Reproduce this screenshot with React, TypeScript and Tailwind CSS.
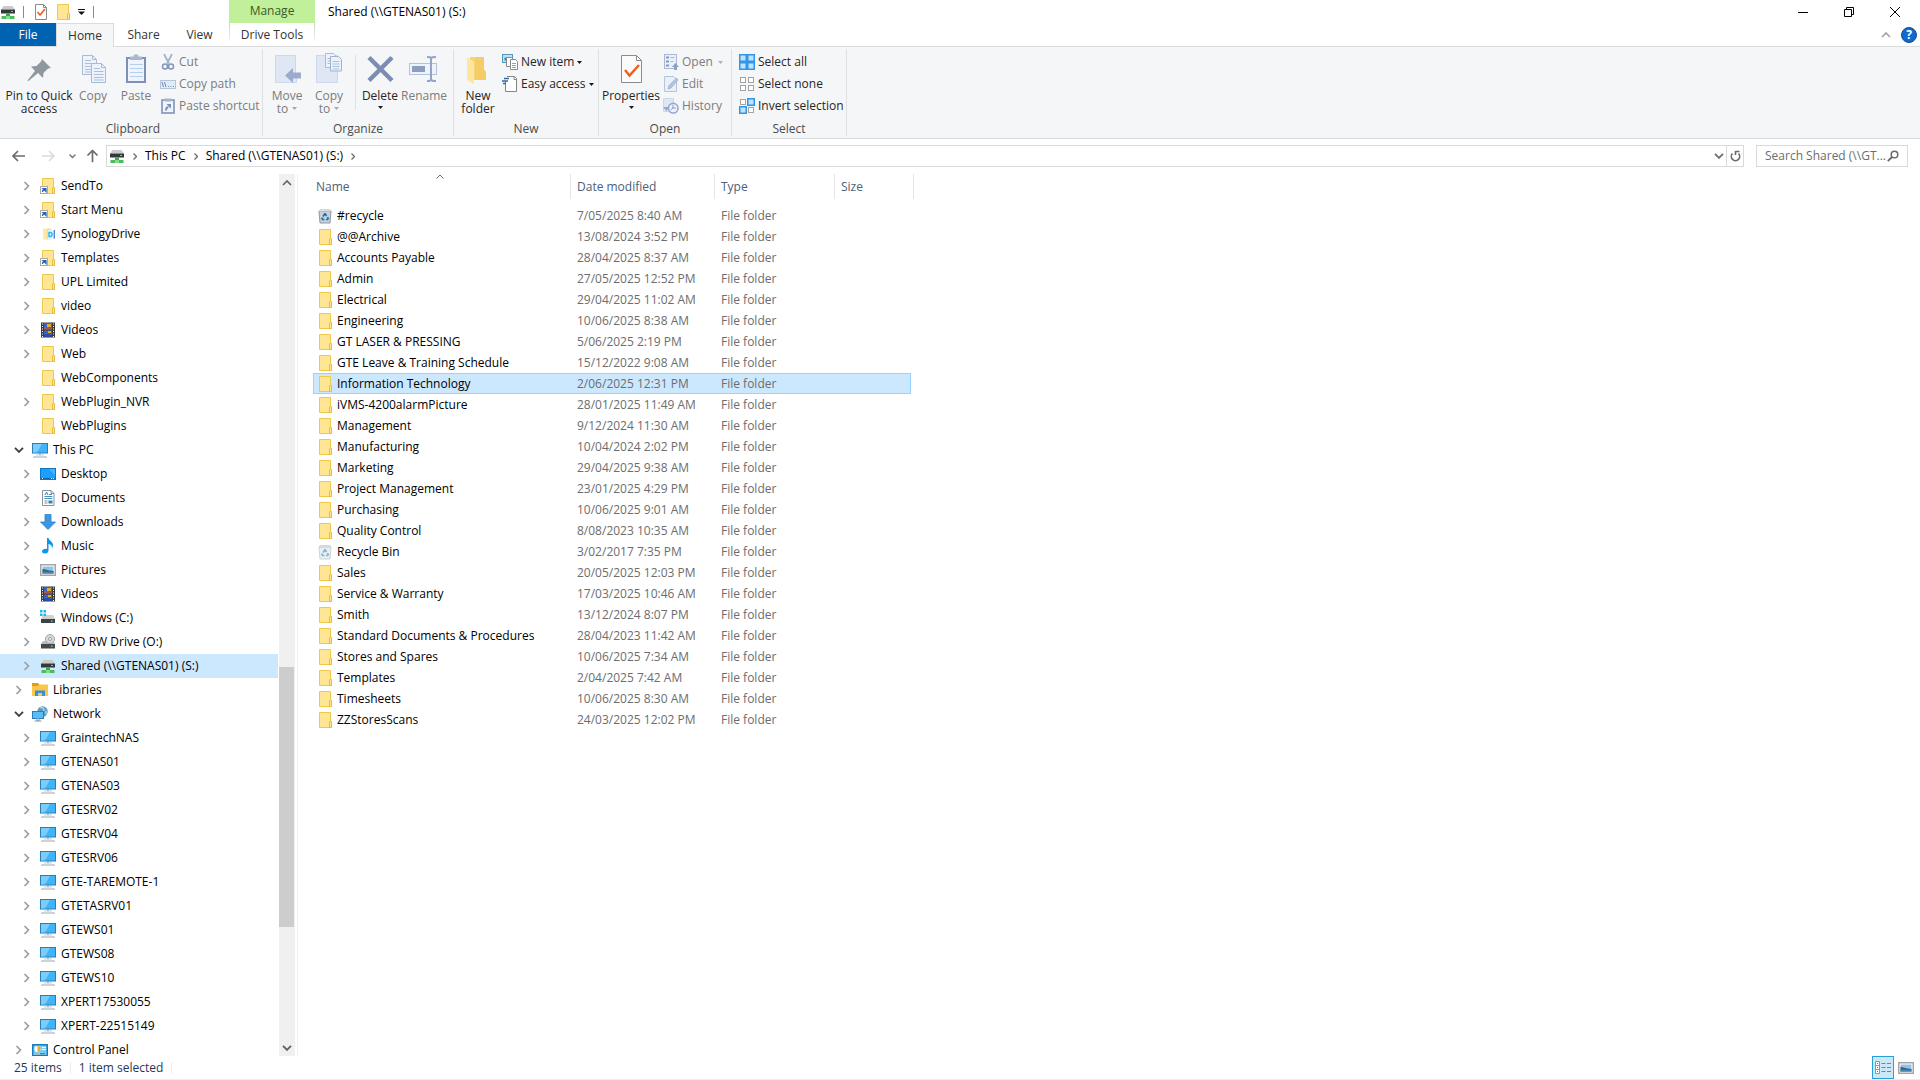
import React from "react";

type IconProps = { className?: string };
const S = ({ s = 16, className = "", children }: { s?: number; className?: string; children: React.ReactNode }) => (
  <svg width={s} height={s} viewBox={`0 0 ${s} ${s}`} className={`shrink-0 ${className}`} fill="none" aria-hidden="true">
    {children}
  </svg>
);

/* ---------- small 16px icons ---------- */
const Folder = () => (
  <S>
    <path d="M2.5.5h11v9h1v6h-12z" fill="#ffe694" stroke="#efc84a" />
    <path d="M12.500 15.500v-5.500l1-1 1 .5v6z" fill="#ffe694" stroke="#e8bd3c" />
  </S>
);
const FolderLink = () => (
  <S>
    <path d="M2.5.5h11v9h1v6h-12z" fill="#ffe694" stroke="#efc84a" />
    <path d="M12.500 15.500v-5.500l1-1 1 .5v6z" fill="#ffe694" stroke="#e8bd3c" />
    <rect x="0.500" y="8.500" width="7" height="7" fill="#fff" stroke="#a9a9a9" />
    <path d="M2.500 14c0-2 .5-2.500 2-2.500M3 10.500h3v3z" stroke="#2a62a8" strokeWidth="1.200" fill="#2a62a8" />
  </S>
);
const Synology = () => (
  <S>
    <path d="M6 2.500h5v11H6z" fill="#fbdc83" />
    <path d="M3 2l3.500 1.500v11L3 13z" fill="#ffe9a8" />
    <rect x="8" y="4" width="7" height="9" fill="#e6f5fc" />
    <path d="M9 6.500h2l1 1v2l-1 1H9z" stroke="#2ab5e8" strokeWidth="1.400" />
    <path d="M14.300 4v8.500" stroke="#4a7fe0" strokeWidth="1.300" />
  </S>
);
const Video = () => (
  <S>
    <rect x="1" y="0.500" width="14" height="15" fill="#3b3b3b" />
    <path d="M2.500 1.500v14M13.500 1.500v14" stroke="#fff" strokeWidth="1" strokeDasharray="1 1.500" />
    <rect x="4" y="1" width="8" height="6.500" fill="#3a63c4" />
    <rect x="4" y="8.500" width="8" height="6.500" fill="#3a63c4" />
    <path d="M7 2h4v3H7z" fill="#d8b12c" />
    <path d="M4 5h4l4 1.500v1H4z" fill="#b7533c" />
    <path d="M8 9h3v2H8z" fill="#d8b12c" />
    <path d="M4 13l3-1 5 1v2H4z" fill="#2b4b9b" />
  </S>
);
const Monitor = () => (
  <S>
    <rect x="0.500" y="1.500" width="15" height="9.500" fill="#40b4fa" stroke="#2b7db3" />
    <path d="M1 2h9l-5 8.500H1z" fill="#7accfb" />
    <path d="M7 11.500h2v1.500H7z" fill="#8ba0b5" />
    <path d="M4 13h8" stroke="#c3ced8" />
    <path d="M1 15h14" stroke="#98a9bc" />
  </S>
);
const Desktop = () => (
  <S>
    <rect x="0.500" y="2.500" width="15" height="11" fill="#1b9efc" stroke="#0a78c4" />
    <path d="M9 3h6v7z" fill="#45b2ff" />
    <path d="M1 12.500h14" stroke="#0868ad" />
    <path d="M2 12.500h1M11 12.500h1M13 12.500h1" stroke="#fff" />
  </S>
);
const Documents = () => (
  <S>
    <path d="M2.500.5h8.500l3 3v12H2.500z" fill="#fff" stroke="#909090" />
    <path d="M11 .5v3h3" stroke="#909090" />
    <path d="M4.500 6.500h8M4.500 8.500h8M9 4.500h3" stroke="#3f8fbf" />
    <path d="M5 5l1.500-3L8 5" stroke="#2f7fb4" />
    <path d="M4.500 11h3M4.500 13h3" stroke="#8a8a8a" />
    <path d="M8.500 10.500h4v3h-4z" fill="#2f83b5" />
  </S>
);
const Downloads = () => (
  <S>
    <path d="M5 .5h6V8h4.500L8 15.500.5 8H5z" fill="#3c97e3" stroke="#2a80cc" strokeWidth=".8" />
  </S>
);
const Music = () => (
  <S>
    <path d="M7 0h1.500c.5 2.500 4 3.500 4.500 6.500.2 1.500-.5 3-1 4 .3-3-1.500-4-3.500-4.500V12.500c0 2-1.500 3-3.500 3S2 14.500 2 13.200C2 11.500 4.500 10.500 7 11z" fill="#0d95f2" />
  </S>
);
const Pictures = () => (
  <S>
    <rect x="0.750" y="2.750" width="14.500" height="10.500" fill="#fff" stroke="#a0a0a0" strokeWidth="1.400" />
    <rect x="2.500" y="4.500" width="11" height="7" fill="#8ec3ee" />
    <path d="M2.500 7c3 0 5 1.500 11 2v2.500h-11z" fill="#3d6b6b" />
    <path d="M2.500 10h11v1.500h-11z" fill="#4c86bd" />
  </S>
);
const WinDrive = () => (
  <S>
    <path d="M3 5h10l2 4H1z" fill="#d0d0d0" />
    <path d="M0 0h2.500v2.500H0zM3.500 0H6v2.500H3.500zM0 3.500h2.500V6H0zM3.500 3.500H6V6H3.500z" fill="#12bdf2" />
    <rect x="1" y="9" width="14" height="4" fill="#3d4246" />
    <rect x="11" y="10.500" width="1.500" height="1.500" fill="#4be05a" />
  </S>
);
const Dvd = () => (
  <S>
    <path d="M3 7h10l2 3H1z" fill="#bcbcbc" />
    <circle cx="10" cy="5" r="4.500" fill="#d9d9d9" stroke="#a5a5a5" />
    <circle cx="10" cy="5" r="1.500" fill="#fff" stroke="#999" />
    <rect x="1" y="10" width="14" height="4.500" fill="#45494c" />
    <rect x="11" y="11.500" width="1.500" height="1.500" fill="#4be05a" />
  </S>
);
const NetDrive = () => (
  <S>
    <path d="M3.500 2h9L15 5.500H1z" fill="#cbcbcb" />
    <rect x="1" y="5.500" width="14" height="4" fill="#33383b" />
    <rect x="11" y="7" width="2" height="1" fill="#58e265" />
    <path d="M6 9.500h4v3H6z" fill="#3da84b" />
    <path d="M1.500 12h13v3h-13z" fill="#4dbb5a" />
    <path d="M6 12h4v3H6z" fill="#7fdd88" />
  </S>
);
const Libraries = () => (
  <S>
    <path d="M0 1h6l1.500 1.500H16V14H0z" fill="#f9c74a" />
    <path d="M0 1h6l1 1.500L6 4H0z" fill="#dd9f16" />
    <path d="M3 14V8.500h10V14h-3v-3H6v3z" fill="#3a8fdc" />
  </S>
);
const NetworkIcon = () => (
  <S>
    <circle cx="10.500" cy="5.500" r="5.200" fill="#5b9cc0" />
    <path d="M8 2c2-1 4 0 4 2s-3 1-4 3M14 5v3" stroke="#b9dcec" strokeWidth="1.300" />
    <rect x="0.500" y="5.500" width="11" height="7" fill="#55bdfa" stroke="#2b7db3" />
    <path d="M5 12.500h2v2H5zM2.500 15h7" stroke="#7f9ab0" />
  </S>
);
const ControlPanel = () => (
  <S>
    <rect x="0.750" y="2.750" width="14.500" height="11" fill="#7ccdf6" stroke="#1274b5" strokeWidth="1.400" />
    <circle cx="5.500" cy="7" r="3" fill="#fff" />
    <path d="M5.500 7V4a3 3 0 0 1 0 6z" fill="#f2a62b" />
    <path d="M10 5.500h4M10 7.500h4" stroke="#fff" />
    <path d="M3 11.800h4" stroke="#f2a62b" />
    <path d="M8 11.800h5" stroke="#1274b5" />
  </S>
);
const Recycle = ({ pale = false }: { pale?: boolean }) => (
  <S>
    <path d="M2 3h12l-1 12H3z" fill={pale ? "#eceef0" : "#c9d2d9"} stroke={pale ? "#cfd4d8" : "#8e999f"} />
    <path d="M3 1.500h10l1 1.500H2z" fill="#e4eaee" stroke="#c5cace" strokeWidth=".7" />
    <path d="M8 5.500l1.500 2.500M8 5.500L6 8.500M5 11.500h2.500M11 11.500H9M5.500 9.500l-.8 2M10.500 9l1 2.500" stroke={pale ? "#76bce4" : "#1274c4"} strokeWidth="1.700" />
  </S>
);

/* ---------- chevrons, arrows ---------- */
const ChevR = ({ className = "text-[#a0a0a0]" }: IconProps) => (
  <svg width="6" height="10" viewBox="0 0 6 10" className={`shrink-0 ${className}`} fill="none" aria-hidden="true">
    <path d="M.5 1l4 4-4 4" stroke="currentColor" strokeWidth="1.700" />
  </svg>
);
const CrumbR = () => (
  <svg width="4" height="7" viewBox="0 0 4 7" className="shrink-0" fill="none" aria-hidden="true">
    <path d="M.5.5l3 3-3 3" stroke="#6a6a6a" strokeWidth="1.300" />
  </svg>
);
const ChevD = ({ className = "text-[#404040]" }: IconProps) => (
  <svg width="10" height="6" viewBox="0 0 10 6" className={`shrink-0 ${className}`} fill="none" aria-hidden="true">
    <path d="M1 .8l4 4 4-4" stroke="currentColor" strokeWidth="1.900" />
  </svg>
);
const ChevU = ({ className = "text-[#606060]" }: IconProps) => (
  <svg width="10" height="6" viewBox="0 0 10 6" className={`shrink-0 ${className}`} fill="none" aria-hidden="true">
    <path d="M1 5l4-4 4 4" stroke="currentColor" strokeWidth="1.600" />
  </svg>
);
const Tri = ({ className = "text-[#1a1a1a]" }: IconProps) => (
  <svg width="5" height="3" viewBox="0 0 5 3" className={`shrink-0 ${className}`} aria-hidden="true">
    <path d="M0 0h5L2.500 3z" fill="currentColor" />
  </svg>
);
const CheckDoc = () => (
  <S>
    <path d="M2.500.5h8l3 3v12h-11z" fill="#fff" stroke="#8a8a8a" />
    <path d="M10.500.5v3h3" stroke="#8a8a8a" />
    <path d="M4.500 8l2.500 3 5-6" stroke="#f2601c" strokeWidth="1.700" />
  </S>
);

/* ---------- ribbon 32px icons ---------- */
const Pin = () => (
  <S s={32}>
    <path d="M19 5l9 9-3 .5-4.500 4.500-.5 5-5-5L5.500 27l-1-.5L12 17l-4-4.500 5.500-.5L18 7.500z" transform="translate(0 1)" fill="#8e989f" />
  </S>
);
const Page = ({ x, y }: { x: number; y: number }) => (
  <g transform={`translate(${x} ${y})`}>
    <path d="M.5.5h10l4 4v15H.5z" fill="#edf2fb" stroke="#a9bad5" />
    <path d="M10.500.5v4h4" stroke="#a9bad5" />
    <path d="M3 5.500h6M3 8.500h9.500M3 11.500h9.500M3 14.500h9.500M3 17h9.500" stroke="#a9bfe0" />
  </g>
);
const CopyBig = () => (
  <S s={32}>
    <Page x={5} y={2} />
    <Page x={14} y={10} />
  </S>
);
const PasteBig = () => (
  <S s={32}>
    <rect x="7" y="5" width="18" height="24" fill="#eef3fc" stroke="#7f90b8" strokeWidth="2" />
    <path d="M10 3.500h3.500c0-3 5-3 5 0H22V7H10z" fill="#aab7cc" />
    <path d="M10 11.500h13M10 15.500h13M10 19.500h13M10 23.500h13" stroke="#b9cdee" />
  </S>
);
const MoveBig = () => (
  <S s={32}>
    <path d="M4.500 2.500h20v21l1 1v5h-21z" fill="#dfe7f5" stroke="#ccd7ec" />
    <path d="M14 22.500l8-7.500v4.500h8v6h-8V30z" fill="#9aabce" />
  </S>
);
const CopyToBig = () => (
  <S s={32}>
    <path d="M3.500 2.500h21v27h-21z" fill="#dfe7f5" stroke="#ccd7ec" />
    <g transform="translate(12 0)">
      <path d="M.5.5h8l3 3v11H.5z" fill="#edf2fb" stroke="#a9bad5" />
      <path d="M2.500 5.500h6M2.500 8h6M2.500 10.500h6" stroke="#a9bfe0" />
      <path d="M5.500 3.500h8l3 3v11.500h-11z" fill="#edf2fb" stroke="#a0b2d0" />
      <path d="M7.500 8.500h7M7.500 11h7M7.500 13.500h7M7.500 16h7" stroke="#a9bfe0" />
    </g>
  </S>
);
const DeleteBig = () => (
  <S s={32}>
    <path d="M5 4.500l23 23M28 4.500l-23 23" stroke="#7c8db2" strokeWidth="4.500" />
  </S>
);
const RenameBig = () => (
  <S s={32}>
    <rect x="1.500" y="10.500" width="27" height="11" fill="#eef3fc" stroke="#b3c2dd" />
    <rect x="4" y="13" width="13" height="6" fill="#8c9dc2" />
    <path d="M19 4c3 0 4 0 4 2v20c0 2-1 2-4 2M28 4c-3 0-5 0-5 2v20c0 2 2 2 5 2" stroke="#93a4c8" strokeWidth="2" />
  </S>
);
const NewFolderBig = () => (
  <S s={32}>
    <path d="M8 4h13v11l3 4v8H8z" fill="#f7d475" />
    <path d="M13 4h9v13l2 2v8H13z" fill="#f5cd66" />
    <path d="M5 4l7 5v22l-7-4z" fill="#ffe69c" />
  </S>
);
const PropsBig = () => (
  <S s={32}>
    <path d="M6.500 2.500h15l5 5v22h-20z" fill="#fbfbfb" stroke="#8c8c8c" />
    <path d="M21.500 2.500v5h5" stroke="#8c8c8c" />
    <path d="M10 17l4.500 5.500L24 12" stroke="#f2601c" strokeWidth="2.500" />
  </S>
);

/* ---------- ribbon 16px icons ---------- */
const Cut = () => (
  <S>
    <path d="M4 0l5 9.500M12 0L7 9.500" stroke="#a5b3cc" strokeWidth="1.800" />
    <circle cx="5" cy="12.500" r="2.500" stroke="#8395b8" strokeWidth="1.500" />
    <circle cx="11" cy="12.500" r="2.500" stroke="#8395b8" strokeWidth="1.500" />
  </S>
);
const CopyPath = () => (
  <S>
    <rect x="0.500" y="4.500" width="15" height="8" fill="#e3ebf8" stroke="#b5c4dd" />
    <path d="M2 6l1.500 5M4.500 6L6 11M8 10.500h1M10.500 10.500h1M13 10.500h1" stroke="#7587ab" />
  </S>
);
const PasteShort = () => (
  <S>
    <rect x="2" y="2" width="12" height="13" fill="#eef3fc" stroke="#8193ba" strokeWidth="1.600" />
    <path d="M5 .5h6v3H5z" fill="#a5b3cc" />
    <path d="M6 12.500c0-2 .3-3.300 2.500-3.500" stroke="#7b8db5" strokeWidth="1.800" />
    <path d="M6.500 6H11v4.500z" fill="#7b8db5" />
  </S>
);
const NewItem = () => (
  <S>
    <rect x="0.500" y="0.500" width="10" height="8" fill="#bfe3f5" stroke="#4f97bd" />
    <path d="M2.500 3.500h5v3h-5z" fill="#4a8198" />
    <path d="M4.500 3.500h5l2 2v7h-7z" fill="#fff" stroke="#8a8a8a" />
    <path d="M8.500 5.500h5l2 2v8h-7z" fill="#fff" stroke="#8a8a8a" />
    <path d="M10 9.500h4M10 11.500h4M10 13.500h4" stroke="#7fa6cf" />
  </S>
);
const EasyAccess = () => (
  <S>
    <path d="M5 .5h7.500l2 2v13h-11V5" fill="#fff" stroke="#858585" />
    <path d="M12 .5v3h3" stroke="#858585" />
    <path d="M2 2.500h5M0 5h6M1 7.500h3" stroke="#2f6aa5" strokeWidth="1.300" />
  </S>
);
const OpenSm = () => (
  <S>
    <rect x="1.500" y="0.500" width="12" height="14" fill="#eaf0fa" stroke="#a9b9d4" />
    <path d="M3 2.500h3v2H3zM3 6.500h3v2H3zM3 10.500h3v2H3z" fill="#8799bd" />
    <path d="M7.500 3.500h4M7.500 7.500h3" stroke="#a9b9d4" />
    <path d="M12.500 9l3.500 4h-2v3h-3v-3H9z" fill="#8c9fc4" />
  </S>
);
const EditSm = () => (
  <S>
    <path d="M1.500.5h9l3 3v12h-12z" fill="#eaf0fa" stroke="#b5c4dd" />
    <path d="M5 13l1-3.500L13.500 2l1.500 2-7 8z" fill="#b4c3de" stroke="#98a9ca" strokeWidth=".7" />
  </S>
);
const HistorySm = () => (
  <S>
    <path d="M.5.5h10v13H.5z" fill="#dfe7f5" stroke="#ccd7ec" />
    <circle cx="10.200" cy="10.200" r="4.800" fill="#eef3fc" stroke="#96a8cb" strokeWidth="1.600" />
    <path d="M10 7v3h3M7.500 12l2.500-2" stroke="#8799bd" />
    <path d="M0 9h6.500L3.300 13z" fill="#96a8cb" />
  </S>
);
const Sq = ({ x, y, on }: { x: number; y: number; on: boolean }) =>
  on ? (
    <rect x={x + 0.75} y={y + 0.75} width="6.500" height="6.500" fill="#bfe3fd" stroke="#2f96e8" strokeWidth="1.500" />
  ) : (
    <rect x={x + 1.5} y={y + 1.5} width="5" height="5" fill="#fff" stroke="#a3a3a3" />
  );
const Squares = ({ on }: { on: boolean[] }) => (
  <S>
    <Sq x={0} y={0} on={on[0]} />
    <Sq x={8} y={0} on={on[1]} />
    <Sq x={0} y={8} on={on[2]} />
    <Sq x={8} y={8} on={on[3]} />
  </S>
);

/* ---------- ribbon parts ---------- */
const Big = ({ icon, lines, w, off, caret }: { icon: React.ReactNode; lines: string[]; w: string; off?: boolean; caret?: "inline" | "below" }) => (
  <button type="button" className={`mt-0.5 flex shrink-0 flex-col items-center whitespace-nowrap leading-[13px] ${w} ${off ? "text-[#7c7c7c]" : "text-[#262626]"}`}>
    <span className="mb-1">{icon}</span>
    {lines.map((l, i) => (
      <span key={l} className="flex items-center gap-1">
        {l}
        {caret === "inline" && i === lines.length - 1 && <Tri className="text-[#a8a8a8]" />}
      </span>
    ))}
    {caret === "below" && <Tri className="mt-1 text-[#1a1a1a]" />}
  </button>
);
const Small = ({ icon, label, off, caret }: { icon: React.ReactNode; label: string; off?: boolean; caret?: boolean }) => (
  <button type="button" className={`flex h-[22px] items-center gap-[3px] whitespace-nowrap ${off ? "text-[#7c7c7c]" : "text-[#262626]"}`}>
    {icon}
    <span>{label}</span>
    {caret && <Tri className={off ? "ml-0.5 text-[#b0b0b0]" : "text-[#1a1a1a]"} />}
  </button>
);
const Group = ({ label, w, children }: { label: string; w: string; children: React.ReactNode }) => (
  <section aria-label={label} className={`flex shrink-0 flex-col border-r border-[#dfe0e1] ${w}`}>
    <div className="flex flex-1 items-start pt-0.5">{children}</div>
    <div className="h-[15px] text-center leading-[15px] text-[#4b4b4b]">{label}</div>
  </section>
);

/* ---------- data ---------- */
type Node = { n: string; i: React.ReactNode; l?: 1 | 2; open?: boolean; leaf?: boolean; sel?: boolean };
const tree: Node[] = [
  { n: "SendTo", i: <FolderLink /> },
  { n: "Start Menu", i: <FolderLink /> },
  { n: "SynologyDrive", i: <Synology /> },
  { n: "Templates", i: <FolderLink /> },
  { n: "UPL Limited", i: <Folder /> },
  { n: "video", i: <Folder /> },
  { n: "Videos", i: <Video /> },
  { n: "Web", i: <Folder /> },
  { n: "WebComponents", i: <Folder />, leaf: true },
  { n: "WebPlugin_NVR", i: <Folder /> },
  { n: "WebPlugins", i: <Folder />, leaf: true },
  { n: "This PC", i: <Monitor />, l: 1, open: true },
  { n: "Desktop", i: <Desktop /> },
  { n: "Documents", i: <Documents /> },
  { n: "Downloads", i: <Downloads /> },
  { n: "Music", i: <Music /> },
  { n: "Pictures", i: <Pictures /> },
  { n: "Videos", i: <Video /> },
  { n: "Windows (C:)", i: <WinDrive /> },
  { n: "DVD RW Drive (O:)", i: <Dvd /> },
  { n: "Shared (\\\\GTENAS01) (S:)", i: <NetDrive />, sel: true },
  { n: "Libraries", i: <Libraries />, l: 1 },
  { n: "Network", i: <NetworkIcon />, l: 1, open: true },
  ...["GraintechNAS", "GTENAS01", "GTENAS03", "GTESRV02", "GTESRV04", "GTESRV06", "GTE-TAREMOTE-1", "GTETASRV01", "GTEWS01", "GTEWS08", "GTEWS10", "XPERT17530055", "XPERT-22515149"].map(
    (n): Node => ({ n, i: <Monitor /> })
  ),
  { n: "Control Panel", i: <ControlPanel />, l: 1 },
];
const files: [string, string][] = [
  ["#recycle", "7/05/2025 8:40 AM"],
  ["@@Archive", "13/08/2024 3:52 PM"],
  ["Accounts Payable", "28/04/2025 8:37 AM"],
  ["Admin", "27/05/2025 12:52 PM"],
  ["Electrical", "29/04/2025 11:02 AM"],
  ["Engineering", "10/06/2025 8:38 AM"],
  ["GT LASER & PRESSING", "5/06/2025 2:19 PM"],
  ["GTE Leave & Training Schedule", "15/12/2022 9:08 AM"],
  ["Information Technology", "2/06/2025 12:31 PM"],
  ["iVMS-4200alarmPicture", "28/01/2025 11:49 AM"],
  ["Management", "9/12/2024 11:30 AM"],
  ["Manufacturing", "10/04/2024 2:02 PM"],
  ["Marketing", "29/04/2025 9:38 AM"],
  ["Project Management", "23/01/2025 4:29 PM"],
  ["Purchasing", "10/06/2025 9:01 AM"],
  ["Quality Control", "8/08/2023 10:35 AM"],
  ["Recycle Bin", "3/02/2017 7:35 PM"],
  ["Sales", "20/05/2025 12:03 PM"],
  ["Service & Warranty", "17/03/2025 10:46 AM"],
  ["Smith", "13/12/2024 8:07 PM"],
  ["Standard Documents & Procedures", "28/04/2023 11:42 AM"],
  ["Stores and Spares", "10/06/2025 7:34 AM"],
  ["Templates", "2/04/2025 7:42 AM"],
  ["Timesheets", "10/06/2025 8:30 AM"],
  ["ZZStoresScans", "24/03/2025 12:02 PM"],
];

const TitleBar = () => (
  <header className="flex h-[46px] shrink-0">
    <div className="flex w-[229px] shrink-0 flex-col">
      <div className="flex h-[23px] items-center">
        <NetDrive />
        <span className="ml-[7px] h-3 w-px bg-[#8a8a8a]" />
        <button type="button" aria-label="Properties" className="ml-[9px]"><CheckDoc /></button>
        <button type="button" aria-label="New folder" className="ml-1.5"><Folder /></button>
        <button type="button" aria-label="Customize Quick Access Toolbar" className="ml-[7px]">
          <svg width="7" height="6" viewBox="0 0 7 6" aria-hidden="true"><path d="M0 0h7v1H0zM0 2.500h7L3.500 6z" fill="#111" /></svg>
        </button>
        <span className="ml-2 h-3 w-px bg-[#8a8a8a]" />
      </div>
      <nav className="flex h-[23px] leading-[24px] text-[#333]">
        <button type="button" className="w-14 bg-[#0063b1] text-white">File</button>
        <button type="button" className="z-10 -mb-px w-[58px] border border-b-0 border-[#dadbdc] bg-[#f5f6f7] leading-[22px]">Home</button>
        <button type="button" className="w-[59px]">Share</button>
        <button type="button" className="w-[53px]">View</button>
      </nav>
    </div>
    <div className="flex w-[86px] shrink-0 flex-col text-center">
      <div className="h-[23px] bg-[#c1f09b] leading-[21px] text-[#3c5a24]">Manage</div>
      <button type="button" className="flex h-[23px] justify-between leading-[24px] text-[#333]">
        <span className="h-[18px] w-px bg-linear-to-b from-[#cfcfcf] to-[#f4f4f4]" />
        <span>Drive Tools</span>
        <span className="h-[18px] w-px bg-linear-to-b from-[#cfcfcf] to-[#f4f4f4]" />
      </button>
    </div>
    <h1 className="flex-1 pl-[13px] leading-[24px] text-black">Shared (\\GTENAS01) (S:)</h1>
    <div className="flex shrink-0 flex-col">
      <div className="flex h-[23px] items-center pr-0.5">
        <button type="button" aria-label="Minimize" className="flex w-[46px] justify-center">
          <svg width="10" height="10" viewBox="0 0 10 10" aria-hidden="true"><path d="M0 5.500h10" stroke="#000" /></svg>
        </button>
        <button type="button" aria-label="Restore" className="flex w-[46px] justify-center">
          <svg width="10" height="10" viewBox="0 0 10 10" fill="none" aria-hidden="true"><path d="M.5 2.500h7v7h-7zM2.500 2.500v-2h7v7h-2" stroke="#000" /></svg>
        </button>
        <button type="button" aria-label="Close" className="flex w-[46px] justify-center">
          <svg width="10" height="10" viewBox="0 0 10 10" aria-hidden="true"><path d="M0 0l10 10M10 0L0 10" stroke="#000" /></svg>
        </button>
      </div>
      <div className="flex h-[23px] items-center justify-end gap-2.5 pr-[3px]">
        <button type="button" aria-label="Minimize the Ribbon"><ChevU className="text-[#a0a0a0]" /></button>
        <button type="button" aria-label="Help" className="h-4 w-4 rounded-full border border-[#0a4f96] bg-[#0f6ad0] text-center text-[12px] font-bold leading-[14px] text-white">?</button>
      </div>
    </div>
  </header>
);

const Ribbon = () => (
  <div className="flex h-[93px] shrink-0 border-y border-[#dadbdc] bg-[#f5f6f7] py-0.5">
    <Group label="Clipboard" w="w-[263px] pl-1">
      <Big icon={<Pin />} lines={["Pin to Quick", "access"]} w="w-[70px]" />
      <Big icon={<CopyBig />} lines={["Copy"]} w="w-[38px]" off />
      <Big icon={<PasteBig />} lines={["Paste"]} w="w-12" off />
      <div className="flex flex-col">
        <Small icon={<Cut />} label="Cut" off />
        <Small icon={<CopyPath />} label="Copy path" off />
        <Small icon={<PasteShort />} label="Paste shortcut" off />
      </div>
    </Group>
    <Group label="Organize" w="w-[191px]">
      <Big icon={<MoveBig />} lines={["Move", "to"]} w="w-12" off caret="inline" />
      <Big icon={<CopyToBig />} lines={["Copy", "to"]} w="w-9" off caret="inline" />
      <span className="ml-2 mt-1 h-[55px] w-px bg-[#dfe0e1]" />
      <Big icon={<DeleteBig />} lines={["Delete"]} w="w-12" caret="below" />
      <Big icon={<RenameBig />} lines={["Rename"]} w="w-10" off />
    </Group>
    <Group label="New" w="w-[145px]">
      <Big icon={<NewFolderBig />} lines={["New", "folder"]} w="w-12" />
      <div className="flex flex-col">
        <Small icon={<NewItem />} label="New item" caret />
        <Small icon={<EasyAccess />} label="Easy access" caret />
      </div>
    </Group>
    <Group label="Open" w="w-[133px]">
      <Big icon={<PropsBig />} lines={["Properties"]} w="w-16" caret="below" />
      <div className="flex flex-col">
        <Small icon={<OpenSm />} label="Open" off caret />
        <Small icon={<EditSm />} label="Edit" off />
        <Small icon={<HistorySm />} label="History" off />
      </div>
    </Group>
    <Group label="Select" w="w-[115px]">
      <div className="flex flex-col pl-[7px]">
        <Small icon={<Squares on={[true, true, true, true]} />} label="Select all" />
        <Small icon={<Squares on={[false, false, false, false]} />} label="Select none" />
        <Small icon={<Squares on={[false, true, true, false]} />} label="Invert selection" />
      </div>
    </Group>
  </div>
);

const ArrowH = ({ className = "" }: IconProps) => (
  <svg width="13" height="12" viewBox="0 0 13 12" fill="none" className={className} aria-hidden="true">
    <path d="M6 1L1 6l5 5M1 6h12" stroke="currentColor" strokeWidth="1.700" />
  </svg>
);

const AddressBar = () => (
  <div className="flex h-[35px] shrink-0 items-start pt-1.5">
    <div className="flex h-[22px] w-[106px] shrink-0 items-center pl-3">
      <button type="button" aria-label="Back"><ArrowH className="text-[#6b6b6b]" /></button>
      <button type="button" aria-label="Forward" className="ml-[17px]"><ArrowH className="rotate-180 text-[#dcdcdc]" /></button>
      <button type="button" aria-label="Recent locations" className="ml-3.5">
        <svg width="7" height="5" viewBox="0 0 7 5" fill="none" aria-hidden="true"><path d="M.5.5l3 3 3-3" stroke="#707070" strokeWidth="1.300" /></svg>
      </button>
      <button type="button" aria-label="Up" className="ml-2.5"><ArrowH className="rotate-90 text-[#6b6b6b]" /></button>
    </div>
    <div className="flex h-[22px] flex-1 items-center gap-2 border border-[#d9d9d9] pl-0.5">
      <NetDrive />
      <CrumbR />
      <button type="button">This PC</button>
      <CrumbR />
      <button type="button">Shared (\\GTENAS01) (S:)</button>
      <CrumbR />
      <div className="ml-auto flex h-full items-center gap-0.5">
        <button type="button" aria-label="Previous locations"><ChevD className="text-[#707070]" /></button>
        <button type="button" aria-label="Refresh" className="flex h-full w-[17px] items-center justify-center border-l border-[#d9d9d9]">
          <svg width="11" height="12" viewBox="0 0 11 12" fill="none" aria-hidden="true">
            <path d="M2.500 3.500A4.200 4.200 0 1 0 8.500 3.500M5.500 1v4M5.500 1.500h-4" stroke="#6b6b6b" strokeWidth="1.600" transform="matrix(-1 0 0 1 11 0) rotate(0)" />
          </svg>
        </button>
      </div>
    </div>
    <label className="mx-3 flex h-[22px] w-[152px] shrink-0 items-center border border-[#d9d9d9] pl-2 pr-2">
      <input type="text" aria-label="Search" placeholder="Search Shared (\\GT..." className="w-full min-w-0 bg-transparent outline-none placeholder:text-[#6d6d6d]" />
      <svg width="12" height="12" viewBox="0 0 12 12" fill="none" className="shrink-0" aria-hidden="true">
        <circle cx="7.500" cy="4.500" r="3.300" stroke="#6b6b6b" strokeWidth="1.500" />
        <path d="M5 7L.8 11.200" stroke="#6b6b6b" strokeWidth="1.900" />
      </svg>
    </label>
  </div>
);

const Sidebar = () => (
  <aside className="flex w-[298px] shrink-0 border-r border-[#f0f0f0]">
    <ul className="w-[278px] shrink-0 overflow-hidden">
      {tree.map((t, i) => (
        <li key={i}>
          <button type="button" className={`flex h-6 w-full items-center whitespace-nowrap ${t.l === 1 ? "pl-4" : "pl-6"} ${t.sel ? "bg-[#cce8ff]" : ""}`}>
            <span className={`flex h-4 w-4 shrink-0 items-center ${t.open ? "-ml-0.5 mr-0.5" : ""}`}>{t.leaf ? null : t.open ? <ChevD /> : <ChevR />}</span>
            {t.i}
            <span className="pl-[5px]">{t.n}</span>
          </button>
        </li>
      ))}
    </ul>
    <div className="ml-px flex w-4 flex-col bg-[#f0f0f0]">
      <button type="button" aria-label="Scroll up" className="flex h-[17px] items-center justify-center"><ChevU /></button>
      <div className="grow-[476]" />
      <div className="mr-px grow-[260] bg-[#cdcdcd]" />
      <div className="grow-[112]" />
      <button type="button" aria-label="Scroll down" className="flex h-[17px] items-center justify-center"><ChevD className="text-[#606060]" /></button>
    </div>
  </aside>
);

const Files = () => (
  <main className="flex-1 pl-[15px]">
    <table className="w-[601px] table-fixed border-separate border-spacing-0 text-left">
      <colgroup>
        <col className="w-[258px]" />
        <col className="w-36" />
        <col className="w-[120px]" />
        <col className="w-[76px]" />
        <col className="w-[3px]" />
      </colgroup>
      <thead>
        <tr className="h-[25px] text-[#4c607a]">
          <th className="relative border-r border-[#e5e5e5] p-0 pl-[3px] font-normal">
            Name
            <span className="absolute left-[123px] top-0">
              <svg width="8" height="5" viewBox="0 0 8 5" fill="none" aria-hidden="true"><path d="M.5 4.500L4 1l3.500 3.500" stroke="#6d6d6d" /></svg>
            </span>
          </th>
          <th className="border-r border-[#e5e5e5] p-0 pl-1.5 font-normal">Date modified</th>
          <th className="border-r border-[#e5e5e5] p-0 pl-1.5 font-normal">Type</th>
          <th colSpan={2} className="border-r border-[#e5e5e5] p-0 pl-1.5 font-normal">Size</th>
        </tr>
      </thead>
      <tbody>
        <tr className="h-1.5"><td colSpan={5} className="p-0" /></tr>
        {files.map(([n, d]) => {
          const cell = n === "Information Technology" ? "border-y border-[#99d1ff] bg-[#cce8ff]" : "";
          return (
            <tr key={n} className="h-[21px] text-[#6d6d6d]">
              <td className={`p-0 ${cell} ${cell ? "border-l pl-[3px]" : "pl-1"}`}>
                <span className="flex items-center gap-1 whitespace-nowrap leading-4 text-black">
                  {n === "#recycle" ? <Recycle /> : n === "Recycle Bin" ? <Recycle pale /> : <Folder />}
                  {n}
                </span>
              </td>
              <td className={`whitespace-nowrap p-0 pl-1.5 leading-4 ${cell}`}>{d}</td>
              <td className={`whitespace-nowrap p-0 pl-1.5 leading-4 ${cell}`}>File folder</td>
              <td className={`p-0 ${cell} ${cell ? "border-r" : ""}`} />
              <td className="p-0" />
            </tr>
          );
        })}
      </tbody>
    </table>
  </main>
);

export default function App() {
  return (
    <div className="flex h-screen flex-col overflow-hidden bg-white font-['Open_Sans','Noto_Sans',sans-serif] text-[12px] text-black">
      <TitleBar />
      <Ribbon />
      <AddressBar />
      <div className="flex min-h-0 flex-1">
        <Sidebar />
        <Files />
      </div>
      <footer className="flex h-6 shrink-0 items-center border-b border-[#ececec] text-[#1e395b]">
        <span className="border-r border-[#ededed] pl-3.5 pr-2 leading-3">25 items</span>
        <span className="border-r border-[#ededed] px-2 leading-3">1 item selected</span>
        <div className="ml-auto flex items-center gap-1 pr-1.5">
          <button type="button" aria-label="Details view" className="flex h-[23px] w-[22px] items-center justify-center border border-[#26a0da] bg-[#cce8f6]">
            <svg width="16" height="13" viewBox="0 0 16 13" fill="none" className="shrink-0" aria-hidden="true">
              <path d="M.5.5h4v12h-4zM.5 4.500h4M.5 8.500h4" fill="#fff" stroke="#969696" />
              <path d="M2 2.500h1" stroke="#4d8a4d" />
              <path d="M2 6.500h1" stroke="#2f83d5" />
              <path d="M2 10.500h1" stroke="#cc3a2b" />
              <path d="M6.500 2.500h4M12 2.500h4M6.500 6.500h4M12 6.500h4M6.500 10.500h4M12 10.500h4" stroke="#808080" />
            </svg>
          </button>
          <button type="button" aria-label="Large thumbnails view"><Pictures /></button>
        </div>
      </footer>
    </div>
  );
}
